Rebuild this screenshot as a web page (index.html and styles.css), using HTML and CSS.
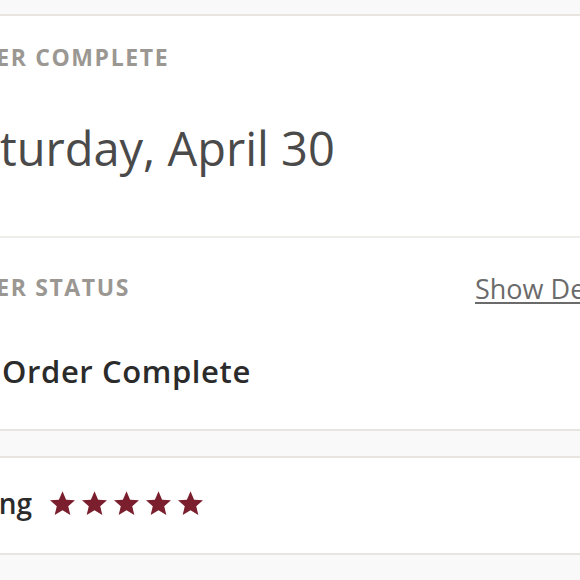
FILE: index.html
```html
<!DOCTYPE html>
<html>
<head>
<meta charset="utf-8">
<link rel="stylesheet" href="styles.css">
</head>
<body>
<div class="page">
  <div class="strip strip-top"></div>
  <section class="panel panel-date">
    <div class="label">ORDER COMPLETE</div>
    <div class="date">Saturday, April 30</div>
  </section>
  <section class="panel panel-status">
    <div class="status-head">
      <div class="label">ORDER STATUS</div>
      <a class="details-link" href="#">Show Details</a>
    </div>
    <div class="status-row">
      <span class="status-icon"></span>
      <span class="status-text">Order Complete</span>
    </div>
  </section>
  <div class="strip strip-mid"></div>
  <section class="panel panel-rating">
    <span class="rating-label-wrap"><span class="rating-label">Your Rating</span></span>
    <span class="stars">
      <svg class="star" viewBox="1.3 1.3 21.4 21.4"><path d="M12 1.5l3.1 7.2 7.6.6-5.8 5 1.8 7.5L12 17.8l-6.7 4 1.8-7.5-5.8-5 7.6-.6z"/></svg>
      <svg class="star" viewBox="1.3 1.3 21.4 21.4"><path d="M12 1.5l3.1 7.2 7.6.6-5.8 5 1.8 7.5L12 17.8l-6.7 4 1.8-7.5-5.8-5 7.6-.6z"/></svg>
      <svg class="star" viewBox="1.3 1.3 21.4 21.4"><path d="M12 1.5l3.1 7.2 7.6.6-5.8 5 1.8 7.5L12 17.8l-6.7 4 1.8-7.5-5.8-5 7.6-.6z"/></svg>
      <svg class="star" viewBox="1.3 1.3 21.4 21.4"><path d="M12 1.5l3.1 7.2 7.6.6-5.8 5 1.8 7.5L12 17.8l-6.7 4 1.8-7.5-5.8-5 7.6-.6z"/></svg>
      <svg class="star" viewBox="1.3 1.3 21.4 21.4"><path d="M12 1.5l3.1 7.2 7.6.6-5.8 5 1.8 7.5L12 17.8l-6.7 4 1.8-7.5-5.8-5 7.6-.6z"/></svg>
    </span>
  </section>
  <div class="strip strip-bottom"></div>
</div>
</body>
</html>
```
FILE: styles.css
```css
html, body {
  margin: 0;
  padding: 0;
  overflow: hidden;
  background: #f9f9f9;
}
body {
  font-family: "Open Sans", "Noto Sans", sans-serif;
  width: 580px;
  height: 580px;
}
.page {
  margin-left: -52px;
  width: 760px;
}
.strip {
  background: #f9f9f9;
}
.strip-top {
  height: 14px;
  border-bottom: 2px solid #e8e5e1;
}
.strip-mid {
  height: 25px;
  border-top: 2px solid #e8e5e1;
  border-bottom: 2px solid #e8e5e1;
}
.strip-bottom {
  height: 40px;
  border-top: 2px solid #e8e5e1;
}
.panel {
  background: #ffffff;
}
.panel-date {
  padding-top: 28px;
  padding-bottom: 60px;
  border-bottom: 2px solid #efedea;
}
.label {
  margin-left: -7px;
  font-size: 23px;
  line-height: 26px;
  font-weight: 700;
  letter-spacing: 1.6px;
  color: #9b9792;
  white-space: nowrap;
}
.date {
  margin-top: 50px;
  font-size: 47px;
  line-height: 56px;
  color: #4a4a4a;
  white-space: nowrap;
}
.panel-status {
  padding-top: 36px;
  padding-bottom: 41px;
}
.status-head {
  display: grid;
  grid-template-columns: 527px auto;
  align-items: start;
}
.details-link {
  font-size: 27px;
  line-height: 30px;
  color: #6b6b6b;
  text-decoration: underline;
  text-decoration-thickness: 2px;
  text-underline-offset: 3px;
  white-space: nowrap;
}
.status-row {
  margin-top: 50px;
  display: flex;
  align-items: center;
}
.status-icon {
  width: 54px;
  flex: none;
}
.status-text {
  font-size: 31px;
  line-height: 34px;
  font-weight: 600;
  letter-spacing: 0.6px;
  color: #2b2b2b;
  white-space: nowrap;
}
.panel-rating {
  height: 90px;
  padding-bottom: 5px;
  display: flex;
  align-items: center;
  gap: 18px;
}
.rating-label-wrap {
  width: 84px;
  flex: none;
  display: flex;
  justify-content: flex-end;
}
.rating-label {
  font-size: 28px;
  line-height: 34px;
  font-weight: 600;
  color: #2b2b2b;
  white-space: nowrap;
}
.stars {
  display: flex;
  gap: 7px;
}
.star {
  width: 25px;
  height: 25px;
  fill: #7b1f2f;
}
```
